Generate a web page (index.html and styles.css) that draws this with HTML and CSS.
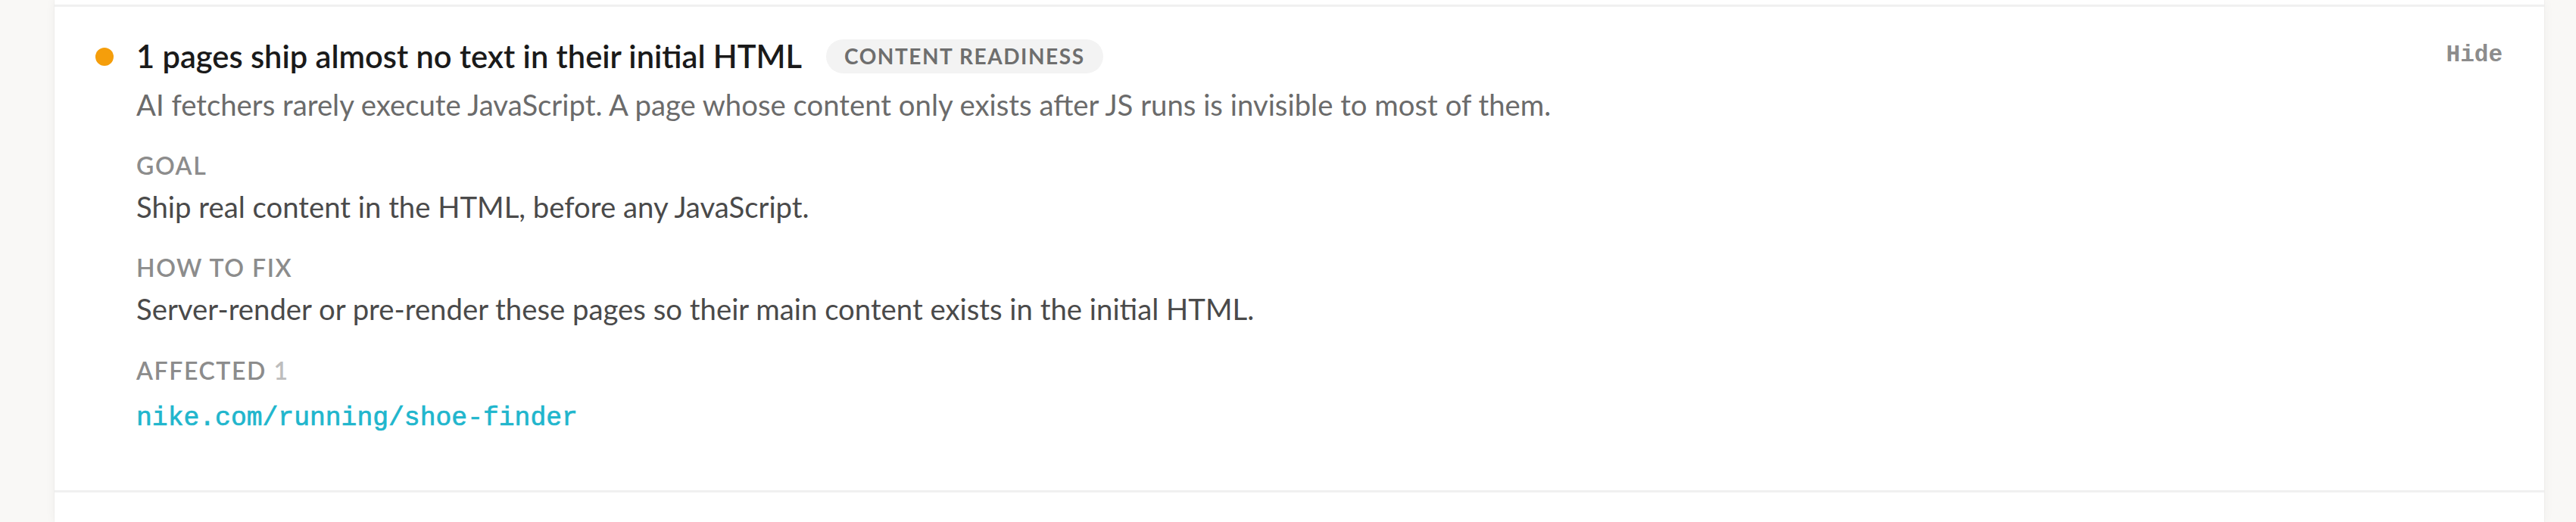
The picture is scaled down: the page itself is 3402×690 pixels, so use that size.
FILE: index.html
```html
<!DOCTYPE html>
<html lang="en">
<head>
<meta charset="utf-8">
<title>Issues</title>
<link rel="stylesheet" href="styles.css">
</head>
<body>
<main class="card">
  <div class="row-stub row-stub-top"></div>
  <section class="issue">
    <span class="dot"></span>
    <header class="issue-head">
      <h3 class="issue-title">1 pages ship almost no text in their initial HTML</h3>
      <span class="badge">Content readiness</span>
      <button class="hide-btn" type="button">Hide</button>
    </header>
    <div class="issue-body">
      <p class="desc">AI fetchers rarely execute JavaScript. A page whose content only exists after JS runs is invisible to most of them.</p>
      <div class="block">
        <div class="label">Goal</div>
        <p class="text">Ship real content in the HTML, before any JavaScript.</p>
      </div>
      <div class="block">
        <div class="label">How to fix</div>
        <p class="text">Server-render or pre-render these pages so their main content exists in the initial HTML.</p>
      </div>
      <div class="block block-affected">
        <div class="label">Affected <span class="count">1</span></div>
        <ul class="urls">
          <li class="url">nike.com/running/shoe-finder</li>
        </ul>
      </div>
    </div>
  </section>
  <div class="row-stub"></div>
</main>
</body>
</html>
```
FILE: styles.css
```css
html, body {
  margin: 0;
  padding: 0;
}
body {
  background: #f9f8f6;
  font-family: "Lato", "Liberation Sans", sans-serif;
  height: 690px;
  overflow: hidden;
}
.card {
  margin: 0 42px 0 72px;
  background: #ffffff;
  height: 690px;
  box-shadow: 0 0 0 1px rgba(0, 0, 0, 0.025), 0 0 14px rgba(0, 0, 0, 0.045);
}
.row-stub-top {
  height: 6px;
}
.issue {
  box-sizing: border-box;
  height: 645px;
  border-top: 3px solid #f0f0f0;
  border-bottom: 3px solid #f0f0f0;
  padding: 40px 55px 0 54px;
  display: grid;
  grid-template-columns: 24px 1fr;
  grid-template-rows: 50px auto;
  align-content: start;
  column-gap: 30px;
  align-items: start;
}
.dot {
  grid-column: 1;
  grid-row: 1;
  align-self: center;
  width: 24px;
  height: 24px;
  border-radius: 50%;
  background: #f59e0b;
  margin-top: 2px;
}
.issue-head {
  grid-column: 2;
  grid-row: 1;
  display: flex;
  align-items: center;
  height: 50px;
}
.issue-title {
  margin: 0;
  font-size: 41.6px;
  line-height: 50px;
  font-weight: 600;
  color: #1a1a1a;
  white-space: nowrap;
}
.badge {
  margin-left: 32px;
  height: 45px;
  line-height: 45px;
  padding: 0 24px;
  border-radius: 23px;
  background: #f3f3f3;
  color: #6e6e6e;
  font-size: 28px;
  font-weight: 700;
  letter-spacing: 1.56px;
  text-transform: uppercase;
  white-space: nowrap;
}
.hide-btn {
  margin-left: auto;
  padding: 0;
  border: 0;
  background: none;
  font-family: "Liberation Mono", monospace;
  font-weight: 700;
  font-size: 31px;
  line-height: 40px;
  color: #8c8c8c;
  cursor: pointer;
  margin-top: -2px;
}
.issue-body {
  grid-column: 2;
  grid-row: 2;
}
.desc {
  margin: 11px 0 0;
  font-size: 38.3px;
  line-height: 57px;
  color: #6b6b6b;
  white-space: nowrap;
}
.block {
  margin-top: 29px;
}
.block-affected {
  margin-top: 30px;
}
.label {
  font-size: 32px;
  line-height: 45px;
  font-weight: 600;
  letter-spacing: 1.6px;
  text-transform: uppercase;
  color: #8c8c8c;
}
.count {
  color: #bdbdbd;
}
.text {
  margin: 4px 0 0;
  font-size: 38.3px;
  line-height: 57px;
  color: #4a4a4a;
  white-space: nowrap;
}
.urls {
  list-style: none;
  margin: 15px 0 0;
  padding: 0;
}
.url {
  font-family: "Liberation Mono", monospace;
  font-size: 34.7px;
  line-height: 52px;
  color: #1fb6cd;
  -webkit-text-stroke: 0.7px #1fb6cd;
}
```
